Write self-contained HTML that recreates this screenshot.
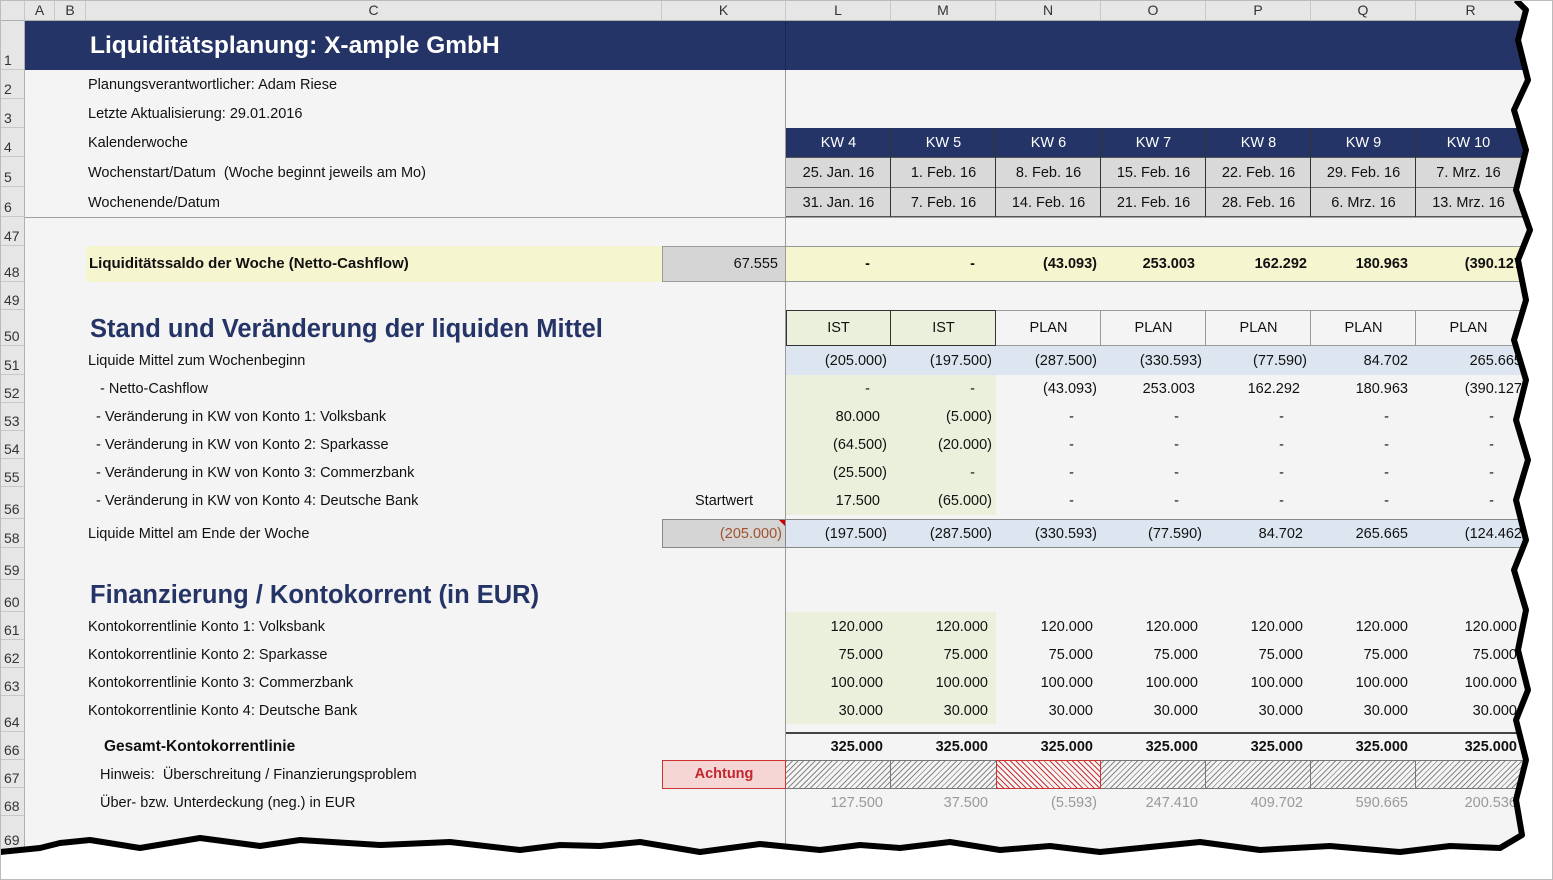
<!DOCTYPE html><html><head><meta charset="utf-8"><style>
body{margin:0;width:1553px;height:880px;overflow:hidden;background:#fff;font-family:"Liberation Sans",Arial,sans-serif;font-size:14.5px;color:#111;position:relative}
div{position:absolute;box-sizing:border-box}
.sh{left:0;top:0;width:1553px;height:880px;background:#f4f4f4}
.ch{top:0;height:21px;background:#e6e6e6;border-right:1px solid #c8c8c8;border-bottom:1px solid #b0b0b0;text-align:center;line-height:21px;font-size:14px;color:#333}
.rh{left:0;width:25px;background:#e6e6e6;border-bottom:1px solid #c8c8c8;border-right:1px solid #b0b0b0;font-size:14px;color:#333;padding-left:4px;display:flex;align-items:flex-end;padding-bottom:1px}
.t{white-space:nowrap;line-height:20px}
.n{text-align:right;padding-right:4px;white-space:nowrap}
.c{text-align:center;white-space:nowrap}
</style></head><body>
<div class="sh"></div>
<div class="ch" style="left:0;width:25px"></div>
<div class="ch" style="left:25px;width:30px">A</div>
<div class="ch" style="left:55px;width:31px">B</div>
<div class="ch" style="left:86px;width:576px">C</div>
<div class="ch" style="left:662px;width:124px">K</div>
<div class="ch" style="left:786px;width:105px">L</div>
<div class="ch" style="left:891px;width:105px">M</div>
<div class="ch" style="left:996px;width:105px">N</div>
<div class="ch" style="left:1101px;width:105px">O</div>
<div class="ch" style="left:1206px;width:105px">P</div>
<div class="ch" style="left:1311px;width:105px">Q</div>
<div class="ch" style="left:1416px;width:110px">R</div>
<div class="rh" style="top:21px;height:49px">1</div>
<div class="rh" style="top:70px;height:29px">2</div>
<div class="rh" style="top:99px;height:29px">3</div>
<div class="rh" style="top:128px;height:29px">4</div>
<div class="rh" style="top:157px;height:30px">5</div>
<div class="rh" style="top:187px;height:30px">6</div>
<div class="rh" style="top:217px;height:29px">47</div>
<div class="rh" style="top:246px;height:36px">48</div>
<div class="rh" style="top:282px;height:28px">49</div>
<div class="rh" style="top:310px;height:36px">50</div>
<div class="rh" style="top:346px;height:29px">51</div>
<div class="rh" style="top:375px;height:28px">52</div>
<div class="rh" style="top:403px;height:28px">53</div>
<div class="rh" style="top:431px;height:28px">54</div>
<div class="rh" style="top:459px;height:28px">55</div>
<div class="rh" style="top:487px;height:32px">56</div>
<div class="rh" style="top:519px;height:29px">58</div>
<div class="rh" style="top:548px;height:32px">59</div>
<div class="rh" style="top:580px;height:32px">60</div>
<div class="rh" style="top:612px;height:28px">61</div>
<div class="rh" style="top:640px;height:28px">62</div>
<div class="rh" style="top:668px;height:28px">63</div>
<div class="rh" style="top:696px;height:36px">64</div>
<div class="rh" style="top:732px;height:28px">66</div>
<div class="rh" style="top:760px;height:28px">67</div>
<div class="rh" style="top:788px;height:28px">68</div>
<div class="rh" style="top:816px;height:34px">69</div>
<div style="left:25px;top:21px;width:1500px;height:49px;background:#253466"></div>
<div style="left:785px;top:21px;width:1px;height:49px;background:#1a2550"></div>
<div class="t" style="left:90px;top:32px;font-size:24.5px;font-weight:bold;color:#fff;line-height:28px">Liquiditätsplanung: X-ample GmbH</div>
<div style="left:25px;top:217px;width:1500px;height:1px;background:#a0a0a0"></div>
<div style="left:785px;top:70px;width:1px;height:780px;background:#9a9a9a"></div>
<div class="t" style="left:88px;top:75px">Planungsverantwortlicher: Adam Riese</div>
<div class="t" style="left:88px;top:104px">Letzte Aktualisierung: 29.01.2016</div>
<div class="t" style="left:88px;top:133px">Kalenderwoche</div>
<div class="t" style="left:88px;top:163px">Wochenstart/Datum &nbsp;(Woche beginnt jeweils am Mo)</div>
<div class="t" style="left:88px;top:193px">Wochenende/Datum</div>
<div style="left:786px;top:128px;width:740px;height:29px;background:#253466"></div>
<div style="left:786px;top:157px;width:740px;height:60px;background:#d9d9d9;border-top:1px solid #555;border-bottom:1px solid #555"></div>
<div style="left:786px;top:187px;width:740px;height:1px;background:#666"></div>
<div style="left:890px;top:128px;width:1px;height:89px;background:#333"></div>
<div style="left:995px;top:128px;width:1px;height:89px;background:#333"></div>
<div style="left:1100px;top:128px;width:1px;height:89px;background:#333"></div>
<div style="left:1205px;top:128px;width:1px;height:89px;background:#333"></div>
<div style="left:1310px;top:128px;width:1px;height:89px;background:#333"></div>
<div style="left:1415px;top:128px;width:1px;height:89px;background:#333"></div>
<div class="c" style="left:786px;top:133px;width:105px;color:#fff;line-height:20px">KW 4</div>
<div class="c" style="left:891px;top:133px;width:105px;color:#fff;line-height:20px">KW 5</div>
<div class="c" style="left:996px;top:133px;width:105px;color:#fff;line-height:20px">KW 6</div>
<div class="c" style="left:1101px;top:133px;width:105px;color:#fff;line-height:20px">KW 7</div>
<div class="c" style="left:1206px;top:133px;width:105px;color:#fff;line-height:20px">KW 8</div>
<div class="c" style="left:1311px;top:133px;width:105px;color:#fff;line-height:20px">KW 9</div>
<div class="c" style="left:1416px;top:133px;width:105px;color:#fff;line-height:20px">KW 10</div>
<div class="c" style="left:786px;top:163px;width:105px;line-height:20px">25. Jan. 16</div>
<div class="c" style="left:891px;top:163px;width:105px;line-height:20px">1. Feb. 16</div>
<div class="c" style="left:996px;top:163px;width:105px;line-height:20px">8. Feb. 16</div>
<div class="c" style="left:1101px;top:163px;width:105px;line-height:20px">15. Feb. 16</div>
<div class="c" style="left:1206px;top:163px;width:105px;line-height:20px">22. Feb. 16</div>
<div class="c" style="left:1311px;top:163px;width:105px;line-height:20px">29. Feb. 16</div>
<div class="c" style="left:1416px;top:163px;width:105px;line-height:20px">7. Mrz. 16</div>
<div class="c" style="left:786px;top:193px;width:105px;line-height:20px">31. Jan. 16</div>
<div class="c" style="left:891px;top:193px;width:105px;line-height:20px">7. Feb. 16</div>
<div class="c" style="left:996px;top:193px;width:105px;line-height:20px">14. Feb. 16</div>
<div class="c" style="left:1101px;top:193px;width:105px;line-height:20px">21. Feb. 16</div>
<div class="c" style="left:1206px;top:193px;width:105px;line-height:20px">28. Feb. 16</div>
<div class="c" style="left:1311px;top:193px;width:105px;line-height:20px">6. Mrz. 16</div>
<div class="c" style="left:1416px;top:193px;width:105px;line-height:20px">13. Mrz. 16</div>
<div style="left:86px;top:246px;width:576px;height:36px;background:#f5f5cf"></div>
<div style="left:662px;top:246px;width:124px;height:36px;background:#d5d5d5;border:1px solid #999"></div>
<div style="left:786px;top:246px;width:740px;height:36px;background:#f5f5cf;border-top:1px solid #999;border-bottom:1px solid #999"></div>
<div class="t" style="left:89px;top:254px;font-weight:bold;font-size:15px">Liquiditätssaldo der Woche (Netto-Cashflow)</div>
<div class="n" style="left:662px;top:254px;width:120px;line-height:20px">67.555</div>
<div style="top:254px;left:0;width:1553px;height:20px;font-weight:bold;line-height:20px">
<div class="n" style="left:786px;width:88px">-</div><div class="n" style="left:891px;width:88px">-</div>
<div class="n" style="left:996px;width:105px">(43.093)</div><div class="n" style="left:1101px;width:98px">253.003</div>
<div class="n" style="left:1206px;width:105px">162.292</div><div class="n" style="left:1311px;width:101px">180.963</div>
<div class="n" style="left:1416px;width:110px">(390.127</div></div>
<div class="t" style="left:90px;top:314px;font-size:25.5px;font-weight:bold;color:#253466;line-height:30px">Stand und Veränderung der liquiden Mittel</div>
<div style="left:786px;top:310px;width:210px;height:36px;background:#ebf0dc;border:1px solid #333"></div>
<div style="left:890px;top:310px;width:1px;height:36px;background:#333"></div>
<div style="left:996px;top:310px;width:530px;height:36px;border-top:1px solid #999;border-bottom:1px solid #999"></div>
<div style="left:1100px;top:310px;width:1px;height:36px;background:#999"></div>
<div style="left:1205px;top:310px;width:1px;height:36px;background:#999"></div>
<div style="left:1310px;top:310px;width:1px;height:36px;background:#999"></div>
<div style="left:1415px;top:310px;width:1px;height:36px;background:#999"></div>
<div style="top:318px;left:0;width:1553px;height:20px;line-height:20px">
<div class="c" style="left:786px;width:105px">IST</div><div class="c" style="left:891px;width:105px">IST</div>
<div class="c" style="left:996px;width:105px">PLAN</div><div class="c" style="left:1101px;width:105px">PLAN</div>
<div class="c" style="left:1206px;width:105px">PLAN</div><div class="c" style="left:1311px;width:105px">PLAN</div><div class="c" style="left:1416px;width:105px">PLAN</div></div>
<div style="left:786px;top:346px;width:740px;height:29px;background:#dce5f0"></div>
<div style="left:786px;top:375px;width:210px;height:140px;background:#ebf0dc"></div>
<div class="t" style="left:88px;top:351px">Liquide Mittel zum Wochenbeginn</div>
<div class="t" style="left:100px;top:379px">- Netto-Cashflow</div>
<div class="t" style="left:96px;top:407px">- Veränderung in KW von Konto 1: Volksbank</div>
<div class="t" style="left:96px;top:435px">- Veränderung in KW von Konto 2: Sparkasse</div>
<div class="t" style="left:96px;top:463px">- Veränderung in KW von Konto 3: Commerzbank</div>
<div class="t" style="left:96px;top:491px">- Veränderung in KW von Konto 4: Deutsche Bank</div>
<div class="t" style="left:695px;top:491px">Startwert</div>
<div style="top:351px;left:0;width:1553px;height:20px;line-height:20px">
<div class="n" style="left:786px;width:105px">(205.000)</div><div class="n" style="left:891px;width:105px">(197.500)</div>
<div class="n" style="left:996px;width:105px">(287.500)</div><div class="n" style="left:1101px;width:105px">(330.593)</div>
<div class="n" style="left:1206px;width:105px">(77.590)</div><div class="n" style="left:1311px;width:101px">84.702</div><div class="n" style="left:1416px;width:110px">265.665</div></div>
<div style="top:379px;left:0;width:1553px;height:20px;line-height:20px">
<div class="n" style="left:786px;width:88px">-</div><div class="n" style="left:891px;width:88px">-</div>
<div class="n" style="left:996px;width:105px">(43.093)</div><div class="n" style="left:1101px;width:98px">253.003</div>
<div class="n" style="left:1206px;width:98px">162.292</div><div class="n" style="left:1311px;width:101px">180.963</div><div class="n" style="left:1416px;width:110px">(390.127</div></div>
<div style="top:407px;left:0;width:1553px;height:20px;line-height:20px">
<div class="n" style="left:786px;width:98px">80.000</div><div class="n" style="left:891px;width:105px">(5.000)</div>
<div class="n" style="left:996px;width:82px">-</div><div class="n" style="left:1101px;width:82px">-</div><div class="n" style="left:1206px;width:82px">-</div><div class="n" style="left:1311px;width:82px">-</div><div class="n" style="left:1416px;width:82px">-</div></div>
<div style="top:435px;left:0;width:1553px;height:20px;line-height:20px">
<div class="n" style="left:786px;width:105px">(64.500)</div><div class="n" style="left:891px;width:105px">(20.000)</div>
<div class="n" style="left:996px;width:82px">-</div><div class="n" style="left:1101px;width:82px">-</div><div class="n" style="left:1206px;width:82px">-</div><div class="n" style="left:1311px;width:82px">-</div><div class="n" style="left:1416px;width:82px">-</div></div>
<div style="top:463px;left:0;width:1553px;height:20px;line-height:20px">
<div class="n" style="left:786px;width:105px">(25.500)</div><div class="n" style="left:891px;width:88px">-</div>
<div class="n" style="left:996px;width:82px">-</div><div class="n" style="left:1101px;width:82px">-</div><div class="n" style="left:1206px;width:82px">-</div><div class="n" style="left:1311px;width:82px">-</div><div class="n" style="left:1416px;width:82px">-</div></div>
<div style="top:491px;left:0;width:1553px;height:20px;line-height:20px">
<div class="n" style="left:786px;width:98px">17.500</div><div class="n" style="left:891px;width:105px">(65.000)</div>
<div class="n" style="left:996px;width:82px">-</div><div class="n" style="left:1101px;width:82px">-</div><div class="n" style="left:1206px;width:82px">-</div><div class="n" style="left:1311px;width:82px">-</div><div class="n" style="left:1416px;width:82px">-</div></div>
<div style="left:662px;top:519px;width:124px;height:29px;background:#d5d5d5;border:1px solid #888"></div>
<div style="left:779px;top:520px;width:0;height:0;border-left:6px solid transparent;border-top:6px solid #c00"></div>
<div style="left:786px;top:519px;width:740px;height:29px;background:#dce5f0;border-top:1px solid #888;border-bottom:1px solid #888"></div>
<div class="t" style="left:88px;top:524px">Liquide Mittel am Ende der Woche</div>
<div style="top:524px;left:0;width:1553px;height:20px;line-height:20px">
<div class="n" style="left:662px;width:124px;color:#a0522d">(205.000)</div>
<div class="n" style="left:786px;width:105px">(197.500)</div><div class="n" style="left:891px;width:105px">(287.500)</div>
<div class="n" style="left:996px;width:105px">(330.593)</div><div class="n" style="left:1101px;width:105px">(77.590)</div>
<div class="n" style="left:1206px;width:101px">84.702</div><div class="n" style="left:1311px;width:101px">265.665</div><div class="n" style="left:1416px;width:110px">(124.462</div></div>
<div class="t" style="left:90px;top:580px;font-size:25.5px;font-weight:bold;color:#253466;line-height:30px">Finanzierung / Kontokorrent (in EUR)</div>
<div style="left:786px;top:612px;width:210px;height:112px;background:#ebf0dc"></div>
<div class="t" style="left:88px;top:617px">Kontokorrentlinie Konto 1: Volksbank</div>
<div class="t" style="left:88px;top:645px">Kontokorrentlinie Konto 2: Sparkasse</div>
<div class="t" style="left:88px;top:673px">Kontokorrentlinie Konto 3: Commerzbank</div>
<div class="t" style="left:88px;top:701px">Kontokorrentlinie Konto 4: Deutsche Bank</div>
<div style="top:617px;left:0;width:1553px;height:20px;line-height:20px">
<div class="n" style="left:786px;width:101px">120.000</div><div class="n" style="left:891px;width:101px">120.000</div><div class="n" style="left:996px;width:101px">120.000</div><div class="n" style="left:1101px;width:101px">120.000</div><div class="n" style="left:1206px;width:101px">120.000</div><div class="n" style="left:1311px;width:101px">120.000</div><div class="n" style="left:1416px;width:105px">120.000</div></div>
<div style="top:645px;left:0;width:1553px;height:20px;line-height:20px">
<div class="n" style="left:786px;width:101px">75.000</div><div class="n" style="left:891px;width:101px">75.000</div><div class="n" style="left:996px;width:101px">75.000</div><div class="n" style="left:1101px;width:101px">75.000</div><div class="n" style="left:1206px;width:101px">75.000</div><div class="n" style="left:1311px;width:101px">75.000</div><div class="n" style="left:1416px;width:105px">75.000</div></div>
<div style="top:673px;left:0;width:1553px;height:20px;line-height:20px">
<div class="n" style="left:786px;width:101px">100.000</div><div class="n" style="left:891px;width:101px">100.000</div><div class="n" style="left:996px;width:101px">100.000</div><div class="n" style="left:1101px;width:101px">100.000</div><div class="n" style="left:1206px;width:101px">100.000</div><div class="n" style="left:1311px;width:101px">100.000</div><div class="n" style="left:1416px;width:105px">100.000</div></div>
<div style="top:701px;left:0;width:1553px;height:20px;line-height:20px">
<div class="n" style="left:786px;width:101px">30.000</div><div class="n" style="left:891px;width:101px">30.000</div><div class="n" style="left:996px;width:101px">30.000</div><div class="n" style="left:1101px;width:101px">30.000</div><div class="n" style="left:1206px;width:101px">30.000</div><div class="n" style="left:1311px;width:101px">30.000</div><div class="n" style="left:1416px;width:105px">30.000</div></div>
<div style="left:786px;top:732px;width:740px;height:2px;background:#444"></div>
<div class="t" style="left:104px;top:737px;font-weight:bold;font-size:15.5px">Gesamt-Kontokorrentlinie</div>
<div style="top:737px;left:0;width:1553px;height:20px;line-height:20px;font-weight:bold">
<div class="n" style="left:786px;width:101px">325.000</div><div class="n" style="left:891px;width:101px">325.000</div><div class="n" style="left:996px;width:101px">325.000</div><div class="n" style="left:1101px;width:101px">325.000</div><div class="n" style="left:1206px;width:101px">325.000</div><div class="n" style="left:1311px;width:101px">325.000</div><div class="n" style="left:1416px;width:105px">325.000</div></div>
<div class="t" style="left:100px;top:765px">Hinweis: &nbsp;Überschreitung / Finanzierungsproblem</div>
<div class="c" style="left:662px;top:760px;width:124px;height:29px;background:#f6d5d5;border:1px solid #c33;color:#c0272d;font-weight:bold;line-height:27px">Achtung</div>
<div style="left:786px;top:760px;width:740px;height:29px;border-top:1px solid #777;border-bottom:1px solid #777;background:repeating-linear-gradient(135deg,#888 0 1px,#f4f4f4 1px 4px)"></div>
<div style="left:996px;top:760px;width:105px;height:29px;border:1px solid #c33;background:repeating-linear-gradient(45deg,#c33 0 1px,#f4f4f4 1px 4px)"></div>
<div style="left:890px;top:760px;width:1px;height:29px;background:#777"></div>
<div style="left:1205px;top:760px;width:1px;height:29px;background:#777"></div>
<div style="left:1310px;top:760px;width:1px;height:29px;background:#777"></div>
<div style="left:1415px;top:760px;width:1px;height:29px;background:#777"></div>
<div class="t" style="left:100px;top:793px">Über- bzw. Unterdeckung (neg.) in EUR</div>
<div style="top:793px;left:0;width:1553px;height:20px;line-height:20px;color:#999">
<div class="n" style="left:786px;width:101px">127.500</div><div class="n" style="left:891px;width:101px">37.500</div><div class="n" style="left:996px;width:105px">(5.593)</div><div class="n" style="left:1101px;width:101px">247.410</div><div class="n" style="left:1206px;width:101px">409.702</div><div class="n" style="left:1311px;width:101px">590.665</div><div class="n" style="left:1416px;width:105px">200.536</div></div>
<svg style="position:absolute;left:0;top:0" width="1553" height="880">
<path fill="#fff" stroke="none" d="M1516,0 L1553,0 L1553,880 L0,880 L0,852 L40,848 L60,843 L90,840 L140,848 L200,838 L260,846 L300,840 L380,845 L450,842 L520,850 L560,845 L600,846 L640,842 L700,852 L760,844 L820,850 L860,845 L900,848 L950,842 L1000,850 L1050,846 L1100,852 L1140,848 L1200,842 L1260,850 L1330,846 L1400,852 L1450,846 L1500,848 L1522,835 L1516,800 L1526,760 L1516,720 L1528,690 L1518,650 L1526,610 L1514,570 L1526,540 L1516,500 L1528,460 L1516,420 L1526,380 L1514,340 L1526,300 L1518,260 L1530,230 L1516,190 L1526,150 L1514,110 L1528,80 L1518,40 L1526,10 Z"/>
<path fill="none" stroke="#000" stroke-width="6" stroke-linejoin="round" d="M1516,0 L1526,10 L1518,40 L1528,80 L1514,110 L1526,150 L1516,190 L1530,230 L1518,260 L1526,300 L1514,340 L1526,380 L1516,420 L1528,460 L1516,500 L1526,540 L1514,570 L1526,610 L1518,650 L1528,690 L1516,720 L1526,760 L1516,800 L1522,835 L1500,848 L1450,846 L1400,852 L1330,846 L1260,850 L1200,842 L1140,848 L1100,852 L1050,846 L1000,850 L950,842 L900,848 L860,845 L820,850 L760,844 L700,852 L640,842 L600,846 L560,845 L520,850 L450,842 L380,845 L300,840 L260,846 L200,838 L140,848 L90,840 L60,843 L40,848 L0,852"/>
<rect x="0.5" y="0.5" width="1552" height="879" fill="none" stroke="#bbb"/>
</svg>
</body></html>
